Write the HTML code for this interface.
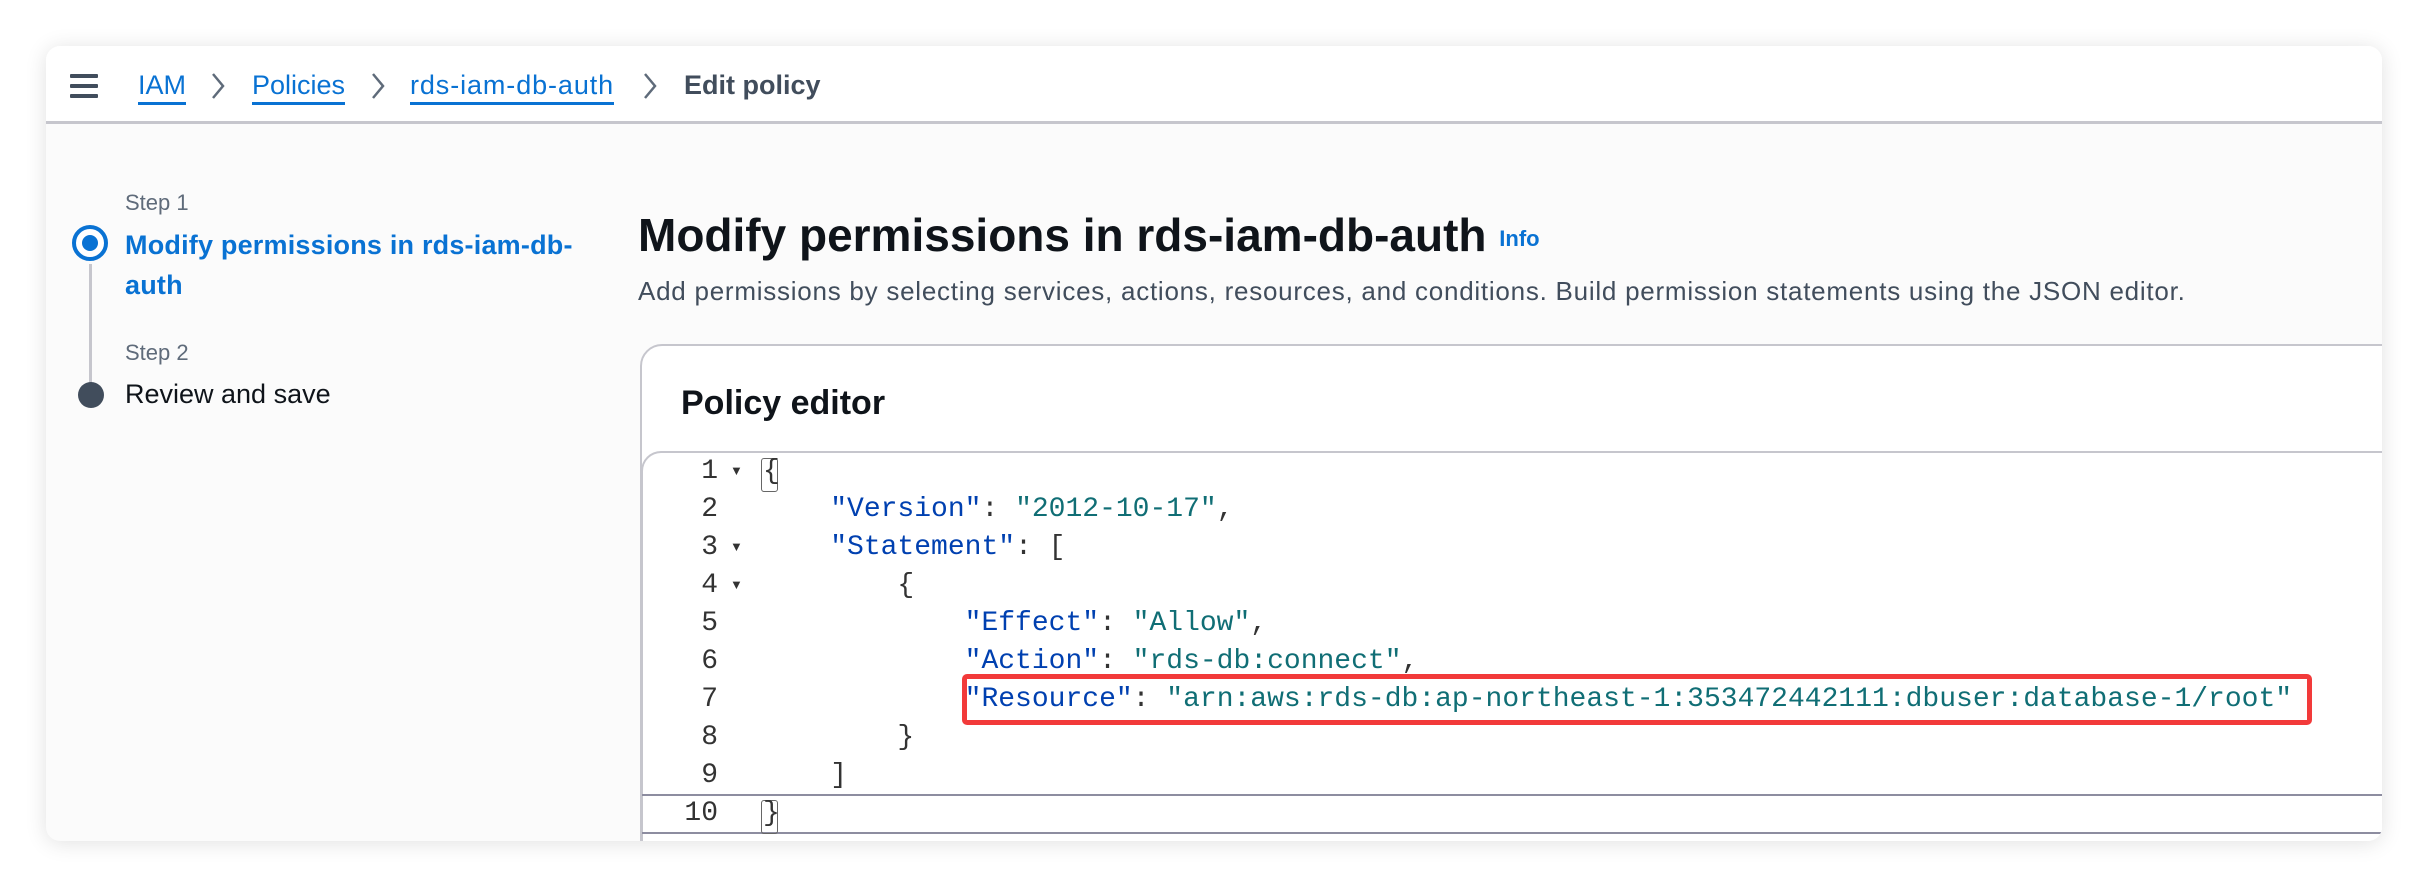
<!DOCTYPE html>
<html><head><meta charset="utf-8"><style>
*{box-sizing:border-box;margin:0;padding:0}
body{width:2428px;height:888px;background:#fff;font-family:"Liberation Sans",sans-serif;position:relative;overflow:hidden}
.card{position:absolute;left:46px;top:46px;width:2336px;height:795px;background:#fbfbfb;border-radius:14px;box-shadow:0 2px 22px rgba(0,0,0,.12);overflow:hidden}
.hdr{position:absolute;left:0;top:0;right:0;height:78px;background:#fff;border-bottom:3px solid #c6c6cd}
.abs{position:absolute;white-space:nowrap}
.bc{top:22px;font-size:27px;line-height:34px;color:#0972d3;border-bottom:3px solid #0972d3}
.chev{top:26px}
.ham span{position:absolute;left:0;width:28px;height:4px;background:#414d5c;border-radius:1px}
.code{font-family:"Liberation Mono",monospace;font-size:28px;line-height:38px}
.k{color:#0040b0}.s{color:#106e75}.p{color:#333}
.ln{position:absolute;width:60px;text-align:right;color:#333;font-family:"Liberation Mono",monospace;font-size:28px;line-height:38px}
.fold{position:absolute;font-size:13px;color:#333}
</style></head><body>
<div class="card">
 <div class="hdr">
  <div class="abs ham" style="left:24px;top:28px;width:28px;height:24px"><span style="top:0"></span><span style="top:10px"></span><span style="top:20px"></span></div>
  <div class="abs bc" style="left:92px">IAM</div>
  <svg class="abs chev" style="left:164px" width="16" height="28" viewBox="0 0 16 28"><path d="M3 2 L13 14 L3 26" fill="none" stroke="#5f6b7a" stroke-width="2.5"/></svg>
  <div class="abs bc" style="left:206px">Policies</div>
  <svg class="abs chev" style="left:324px" width="16" height="28" viewBox="0 0 16 28"><path d="M3 2 L13 14 L3 26" fill="none" stroke="#5f6b7a" stroke-width="2.5"/></svg>
  <div class="abs bc" style="left:364px;letter-spacing:.9px">rds-iam-db-auth</div>
  <svg class="abs chev" style="left:596px" width="16" height="28" viewBox="0 0 16 28"><path d="M3 2 L13 14 L3 26" fill="none" stroke="#5f6b7a" stroke-width="2.5"/></svg>
  <div class="abs" style="left:638px;top:22px;font-size:27px;line-height:34px;font-weight:bold;color:#414d5c">Edit policy</div>
 </div>
 <div class="abs" style="left:79px;top:144px;font-size:22px;color:#5f6b7a">Step 1</div>
 <div class="abs" style="left:26px;top:179px;width:36px;height:36px;border:4px solid #0972d3;border-radius:50%;background:#fff"><div style="position:absolute;left:6px;top:6px;width:16px;height:16px;border-radius:50%;background:#0972d3"></div></div>
 <div class="abs" style="left:79px;top:179px;font-size:27px;line-height:40px;font-weight:bold;color:#0972d3;letter-spacing:.2px">Modify permissions in rds-iam-db-<br>auth</div>
 <div class="abs" style="left:43px;top:218px;width:3px;height:120px;background:#c6c6cd"></div>
 <div class="abs" style="left:79px;top:294px;font-size:22px;color:#5f6b7a">Step 2</div>
 <div class="abs" style="left:32px;top:336px;width:26px;height:26px;border-radius:50%;background:#414d5c"></div>
 <div class="abs" style="left:79px;top:332px;font-size:27px;line-height:32px;color:#0f141a">Review and save</div>
 <div class="abs" style="left:592px;top:162px;font-size:46px;line-height:54px;font-weight:bold;color:#0f141a">Modify permissions in rds-iam-db-auth <span style="font-size:22px;color:#0972d3;vertical-align:middle">Info</span></div>
 <div class="abs" style="left:592px;top:229px;font-size:26px;line-height:32px;color:#414d5c;letter-spacing:.75px">Add permissions by selecting services, actions, resources, and conditions. Build permission statements using the JSON editor.</div>
 <div class="abs" style="left:594px;top:298px;width:1800px;height:500px;background:#fff;border:2px solid #c6c6cd;border-radius:22px 0 0 0"></div>
 <div class="abs" style="left:635px;top:336px;font-size:34px;line-height:42px;font-weight:bold;color:#0f141a">Policy editor</div>
 <div class="abs" style="left:595px;top:405px;width:1800px;height:390px;background:#fff;border:2px solid #c6c6cd;border-right:none;border-bottom:none;border-radius:20px 0 0 0"></div>
 <div class="abs" style="left:596px;top:748px;width:1800px;height:40px;border-top:2px solid #8d8da0;border-bottom:2px solid #8d8da0"></div>
 <div class="ln" style="left:612px;top:407px">1<br>2<br>3<br>4<br>5<br>6<br>7<br>8<br>9<br>10</div>
 <div class="fold" style="left:684px;top:417px">&#9660;</div>
 <div class="fold" style="left:684px;top:493px">&#9660;</div>
 <div class="fold" style="left:684px;top:531px">&#9660;</div>
 <div class="abs" style="left:715px;top:412px;width:17px;height:34px;border:1.5px solid #666;border-radius:3px"></div>
 <div class="abs" style="left:715px;top:754px;width:17px;height:34px;border:1.5px solid #666;border-radius:3px"></div>
 <div class="abs code p" style="left:717px;top:407px;white-space:pre">{
    <span class="k">"Version"</span>: <span class="s">"2012-10-17"</span>,
    <span class="k">"Statement"</span>: [
        {
            <span class="k">"Effect"</span>: <span class="s">"Allow"</span>,
            <span class="k">"Action"</span>: <span class="s">"rds-db:connect"</span>,
            <span class="k">"Resource"</span>: <span class="s">"arn:aws:rds-db:ap-northeast-1:353472442111:dbuser:database-1/root"</span>
        }
    ]
}</div>
 <div class="abs" style="left:916px;top:628px;width:1350px;height:51px;border:5px solid #f23a3a;border-radius:5px"></div>
</div>
</body></html>
